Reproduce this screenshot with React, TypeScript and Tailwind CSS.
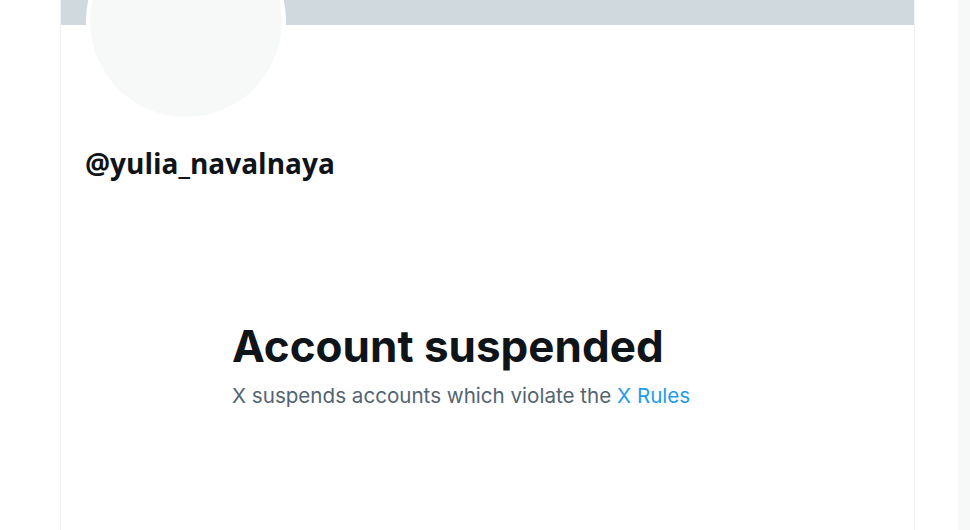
export default function App() {
  return (
    <div className="flex h-[530px] w-full overflow-hidden bg-white">
      <div className="w-[60px] shrink-0" />

      <main className="relative w-[855px] shrink-0 border-x border-[#eff3f4]">
        <div className="h-[25px] bg-[#cfd9de]" />

        {/* avatar sits over the banner */}
        <div className="absolute left-[25px] top-[-79px] h-[200px] w-[200px] rounded-full border-4 border-white bg-[#f7f9f9]" />

        <div className="pl-[24px] pt-[120px]">
          <h2
            className="text-[28px] font-bold leading-[36px] text-[#0f1419]"
            style={{ fontFamily: '"Open Sans", "Liberation Sans", sans-serif' }}
          >
            @yulia_navalnaya
          </h2>
        </div>

        <div
          className="ml-[171px] mt-[139px]"
          style={{ fontFamily: 'Inter, "Liberation Sans", sans-serif' }}
        >
          <h1 className="text-[44px] font-bold leading-[52px] text-[#0f1419]">
            Account suspended
          </h1>
          <p className="mt-[10px] text-[20.6px] leading-[28px] text-[#536471]">
            X suspends accounts which violate the{" "}
            <a className="text-[#1d9bf0]">X Rules</a>
          </p>
        </div>
      </main>

      <div className="flex flex-1 justify-end">
        <div className="w-[12px] bg-[#f7f9f9]" />
      </div>
    </div>
  );
}
